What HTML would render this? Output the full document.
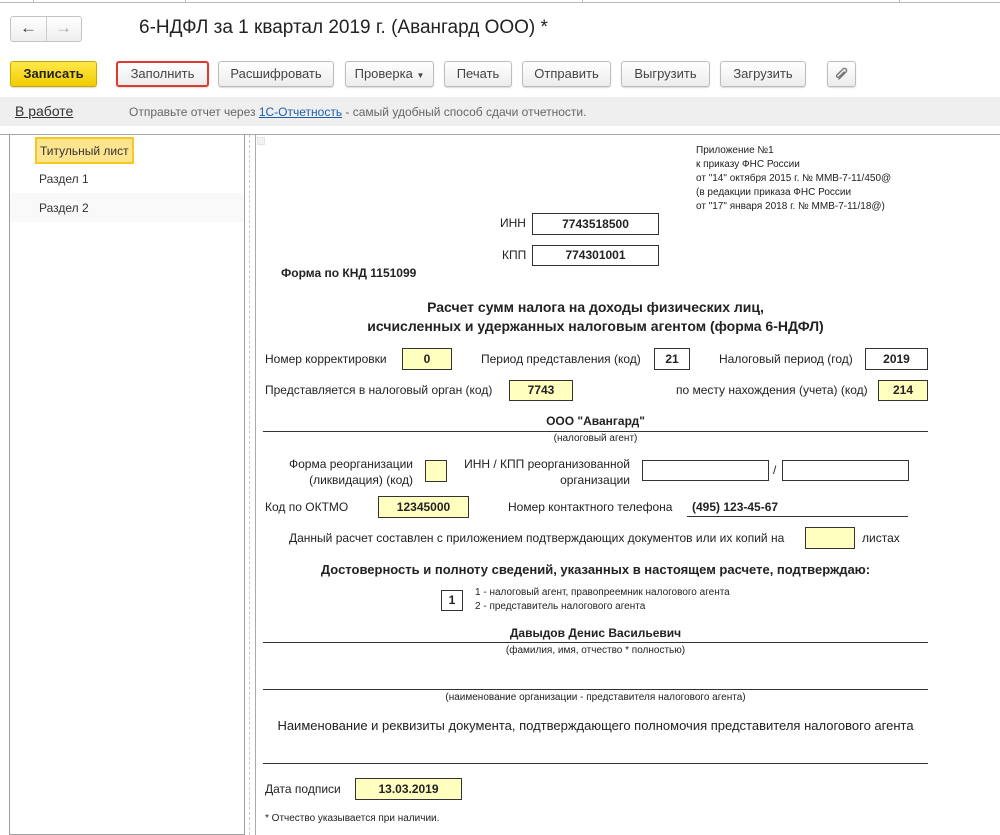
<!DOCTYPE html>
<html><head><meta charset="utf-8"><style>
*{margin:0;padding:0;box-sizing:border-box}
body{width:1000px;height:830px;overflow:hidden;background:#fff;font-family:"Liberation Sans",Arial,sans-serif;color:#333;position:relative}
.a{position:absolute;white-space:nowrap}
.btn{position:absolute;top:61px;height:26px;border:1px solid #bdbdbd;border-radius:3px;background:linear-gradient(#fff,#ececec);box-shadow:0 1px 1px rgba(0,0,0,.15);font-size:13px;color:#444;text-align:center;line-height:24px}
.f{font-family:"Liberation Sans Narrow","Liberation Sans",sans-serif;color:#222}
.bx{position:absolute;border:1px solid #333;font-weight:bold;font-size:12px;text-align:center;color:#222;font-family:"Liberation Sans Narrow","Liberation Sans",sans-serif}
.y{background:#ffffc0}
.ln{position:absolute;height:1px;background:#333}
.c{text-align:center}
</style></head><body>
<div class="a" style="left:0;top:2px;width:1000px;height:1px;background:#bbb"></div>
<div class="a" style="left:33px;top:0;width:1px;height:3px;background:#bbb"></div>
<div class="a" style="left:185px;top:0;width:1px;height:3px;background:#bbb"></div>
<div class="a" style="left:582px;top:0;width:1px;height:3px;background:#bbb"></div>
<div class="a" style="left:899px;top:0;width:1px;height:3px;background:#bbb"></div>
<div class="a" style="left:10px;top:16px;width:72px;height:26px;border:1px solid #c4c4c4;border-radius:3px;background:linear-gradient(#fff,#eee)"></div>
<div class="a" style="left:46px;top:17px;width:1px;height:24px;background:#ccc"></div>
<div class="a" style="left:20px;top:18px;font-size:17px;color:#444;font-weight:bold">&#8592;</div>
<div class="a" style="left:55px;top:18px;font-size:17px;color:#aaa;font-weight:bold">&#8594;</div>
<div class="a" style="left:139px;top:17px;font-size:19px;color:#222">6-НДФЛ за 1 квартал 2019 г. (Авангард ООО) *</div>
<div class="btn" style="left:10px;width:87px;background:linear-gradient(#ffe94a,#f2cc00);border-color:#c9a800;font-weight:bold;color:#222">Записать</div>
<div class="btn" style="left:116px;width:93px;border:2px solid #e0392f;line-height:22px">Заполнить</div>
<div class="btn" style="left:218px;width:116px">Расшифровать</div>
<div class="btn" style="left:345px;width:89px">Проверка <span style="font-size:8px">&#9660;</span></div>
<div class="btn" style="left:444px;width:68px">Печать</div>
<div class="btn" style="left:522px;width:89px">Отправить</div>
<div class="btn" style="left:621px;width:89px">Выгрузить</div>
<div class="btn" style="left:720px;width:86px">Загрузить</div>
<div class="btn" style="left:827px;width:29px"><svg width="14" height="14" viewBox="0 0 14 14" style="margin-top:5px"><path d="M4 12 L11 5 A2 2 0 0 0 8 2 L2 8 A1.2 1.2 0 0 0 4 10 L9 5" fill="none" stroke="#777" stroke-width="1.4" stroke-linecap="round"/></svg></div>
<div class="a" style="left:0;top:97px;width:1000px;height:29px;background:#efefef"></div>
<div class="a" style="left:15px;top:103px;font-size:14px;color:#333;text-decoration:underline">В работе</div>
<div class="a" style="left:129px;top:105px;font-size:12px;color:#666">Отправьте отчет через <span style="color:#1f5fa8;text-decoration:underline">1С-Отчетность</span> - самый удобный способ сдачи отчетности.</div>
<div class="a" style="left:0;top:134px;width:1000px;height:1px;background:#aaa"></div>
<div class="a" style="left:9px;top:135px;width:236px;height:700px;border:1px solid #a0a0a0;border-top:none"></div>
<div class="a" style="left:35px;top:137px;width:99px;height:27px;background:#fde48e;border:2px solid #f6c922;font-size:12px;color:#333;padding:5px 0 0 3px">Титульный лист</div>
<div class="a" style="left:39px;top:172px;font-size:12px;color:#333">Раздел 1</div>
<div class="a" style="left:10px;top:193px;width:234px;height:29px;background:#f9f9f9"></div>
<div class="a" style="left:39px;top:201px;font-size:12px;color:#333">Раздел 2</div>
<div class="a" style="left:249px;top:135px;width:0;height:700px;border-left:1px dashed #ccc"></div>
<div class="a" style="left:255px;top:135px;width:1px;height:700px;background:#aaa"></div>
<div class="a" style="left:257px;top:137px;width:8px;height:8px;background:#f2f2f2;border:1px solid #e5e5e5"></div>
<div class="a f" style="left:696px;top:144px;font-size:10px;line-height:14px">Приложение №1<br>к приказу ФНС России<br>от "14" октября 2015 г. № ММВ-7-11/450@<br>(в редакции приказа ФНС России<br>от "17" января 2018 г. № ММВ-7-11/18@)</div>
<div class="a f" style="left:500px;top:216px;font-size:12px">ИНН</div>
<div class="bx" style="left:532px;top:213px;width:127px;height:22px;line-height:20px">7743518500</div>
<div class="a f" style="left:502px;top:248px;font-size:12px">КПП</div>
<div class="bx" style="left:532px;top:245px;width:127px;height:21px;line-height:19px">774301001</div>
<div class="a f" style="left:281px;top:266px;font-size:12px;font-weight:bold">Форма по КНД 1151099</div>
<div class="a f c" style="left:263px;width:665px;top:298px;font-size:14px;font-weight:bold;line-height:19px">Расчет сумм налога на доходы физических лиц,<br>исчисленных и удержанных налоговым агентом (форма 6-НДФЛ)</div>
<div class="a f" style="left:265px;top:352px;font-size:12px">Номер корректировки</div>
<div class="bx y" style="left:402px;top:348px;width:50px;height:22px;line-height:20px">0</div>
<div class="a f" style="left:481px;top:352px;font-size:12px">Период представления (код)</div>
<div class="bx" style="left:654px;top:348px;width:36px;height:22px;line-height:20px">21</div>
<div class="a f" style="left:719px;top:352px;font-size:12px">Налоговый период (год)</div>
<div class="bx" style="left:865px;top:348px;width:63px;height:22px;line-height:20px">2019</div>
<div class="a f" style="left:265px;top:383px;font-size:12px">Представляется в налоговый орган (код)</div>
<div class="bx y" style="left:509px;top:380px;width:64px;height:21px;line-height:19px">7743</div>
<div class="a f" style="left:676px;top:383px;font-size:12px">по месту нахождения (учета) (код)</div>
<div class="bx y" style="left:878px;top:380px;width:50px;height:21px;line-height:19px">214</div>
<div class="a f c" style="left:263px;width:665px;top:414px;font-size:12px;font-weight:bold">ООО "Авангард"</div>
<div class="ln" style="left:263px;top:431px;width:665px"></div>
<div class="a f c" style="left:263px;width:665px;top:433px;font-size:10px">(налоговый агент)</div>
<div class="a f" style="left:263px;top:456px;width:150px;text-align:right;font-size:12px;line-height:16px">Форма реорганизации<br>(ликвидация) (код)</div>
<div class="bx y" style="left:425px;top:460px;width:22px;height:22px"></div>
<div class="a f" style="left:450px;top:456px;width:180px;text-align:right;font-size:12px;line-height:16px">ИНН / КПП реорганизованной<br>организации</div>
<div class="bx" style="left:642px;top:460px;width:127px;height:21px"></div>
<div class="a f" style="left:773px;top:463px;font-size:12px">/</div>
<div class="bx" style="left:782px;top:460px;width:127px;height:21px"></div>
<div class="a f" style="left:265px;top:500px;font-size:12px">Код по ОКТМО</div>
<div class="bx y" style="left:378px;top:496px;width:91px;height:22px;line-height:20px">12345000</div>
<div class="a f" style="left:508px;top:500px;font-size:12px">Номер контактного телефона</div>
<div class="a f" style="left:692px;top:500px;font-size:12px;font-weight:bold">(495) 123-45-67</div>
<div class="ln" style="left:687px;top:516px;width:221px"></div>
<div class="a f" style="left:289px;top:531px;font-size:12px">Данный расчет составлен с приложением подтверждающих документов или их копий на</div>
<div class="bx y" style="left:805px;top:527px;width:50px;height:22px"></div>
<div class="a f" style="left:862px;top:531px;font-size:12px">листах</div>
<div class="a f c" style="left:263px;width:665px;top:562px;font-size:13px;font-weight:bold">Достоверность и полноту сведений, указанных в настоящем расчете, подтверждаю:</div>
<div class="bx" style="left:441px;top:590px;width:22px;height:21px;line-height:19px">1</div>
<div class="a f" style="left:475px;top:586px;font-size:10px;line-height:14px">1 - налоговый агент, правопреемник налогового агента<br>2 - представитель налогового агента</div>
<div class="a f c" style="left:263px;width:665px;top:626px;font-size:12px;font-weight:bold">Давыдов Денис Васильевич</div>
<div class="ln" style="left:263px;top:642px;width:665px"></div>
<div class="a f c" style="left:263px;width:665px;top:645px;font-size:10px">(фамилия, имя, отчество * полностью)</div>
<div class="ln" style="left:263px;top:689px;width:665px"></div>
<div class="a f c" style="left:263px;width:665px;top:692px;font-size:10px">(наименование организации - представителя налогового агента)</div>
<div class="a f c" style="left:263px;width:665px;top:718px;font-size:13px">Наименование и реквизиты документа, подтверждающего полномочия представителя налогового агента</div>
<div class="ln" style="left:263px;top:763px;width:665px"></div>
<div class="a f" style="left:265px;top:782px;font-size:12px">Дата подписи</div>
<div class="bx y" style="left:355px;top:778px;width:107px;height:22px;line-height:20px">13.03.2019</div>
<div class="a f" style="left:265px;top:813px;font-size:10px">* Отчество указывается при наличии.</div>
</body></html>
